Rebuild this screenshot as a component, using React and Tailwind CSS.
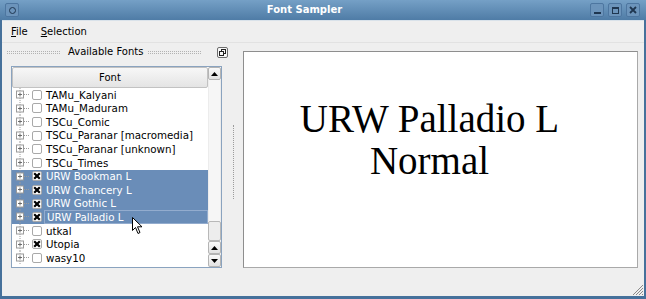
import React from "react";
import clsx from "clsx";

const fonts = [
  { name: "TAMu_Kalyani" },
  { name: "TAMu_Maduram" },
  { name: "TSCu_Comic" },
  { name: "TSCu_Paranar [macromedia]" },
  { name: "TSCu_Paranar [unknown]" },
  { name: "TSCu_Times" },
  { name: "URW Bookman L", checked: true, selected: true },
  { name: "URW Chancery L", checked: true, selected: true },
  { name: "URW Gothic L", checked: true, selected: true },
  { name: "URW Palladio L", checked: true, selected: true, focus: true },
  { name: "utkal" },
  { name: "Utopia", checked: true },
  { name: "wasy10" },
];

function TreeGuide() {
  return (
    <svg width="20" height="13.6" viewBox="0 0 20 13.6" className="shrink-0">
      <line x1="8" y1="0" x2="8" y2="13.6" stroke="#9c9c9c" strokeDasharray="1 1" />
      <line x1="12" y1="6.5" x2="18" y2="6.5" stroke="#9c9c9c" strokeDasharray="1 1" />
      <rect x="4.5" y="3" width="7" height="7" fill="#fff" stroke="#9a9a9a" />
      <line x1="6" y1="6.5" x2="10" y2="6.5" stroke="#6a6a6a" />
      <line x1="8" y1="4.5" x2="8" y2="8.5" stroke="#6a6a6a" />
    </svg>
  );
}

function CheckBox({ checked }) {
  return (
    <div className="flex h-[10px] w-[10px] shrink-0 items-center justify-center rounded-[2px] border border-[#a9a9a9] bg-white">
      {checked && (
        <svg width="8" height="8" viewBox="0 0 8 8">
          <path d="M1.2 1.2 L6.8 6.8 M6.8 1.2 L1.2 6.8" stroke="#000" strokeWidth="2.2" />
        </svg>
      )}
    </div>
  );
}

function Row({ name, checked, selected, focus }) {
  return (
    <div
      className={clsx(
        "flex h-[13.6px] items-center text-[10.3px]",
        selected ? "bg-[#6a8db8] text-white" : "text-black"
      )}>
      <TreeGuide />
      <CheckBox checked={checked} />
      <span
        className={clsx(
          "ml-[2px] flex h-full flex-1 items-center pl-[2px] whitespace-nowrap",
          focus && "border border-[#93acce]"
        )}>
        {name}
      </span>
    </div>
  );
}

function ScrollButton({ down }) {
  return (
    <div className="flex h-[13px] items-center justify-center rounded-[2px] border border-[#b4b4b4] bg-gradient-to-b from-[#fafafa] to-[#e2e2e2]">
      <svg width="7" height="4" viewBox="0 0 7 4">
        <path d={down ? "M0 0 H7 L3.5 4 Z" : "M0 4 H7 L3.5 0 Z"} fill="#000" />
      </svg>
    </div>
  );
}

function TitleButton({ children }) {
  return (
    <div className="flex h-[14px] w-[14px] items-center justify-center rounded-[2px] border border-[#4d76a0] bg-[#6c94bb]">
      {children}
    </div>
  );
}

export default function App() {
  return (
    <div className="relative flex h-[299px] w-[646px] flex-col overflow-hidden bg-[#46719b] font-['DejaVu_Sans',sans-serif] text-[10px] leading-none">
      {/* title bar */}
      <div className="flex h-[20px] items-center bg-gradient-to-b from-[#75a0c6] to-[#4f7ca6] px-[5px]">
        <TitleButton>
          <div className="h-[7px] w-[7px] rounded-full border-[1.5px] border-[#1f3650]" />
        </TitleButton>
        <div className="flex-1 text-center font-bold text-white">Font Sampler</div>
        <div className="flex gap-[4px] pr-[1px]">
          <TitleButton>
            <div className="mt-[6px] h-[2px] w-[7px] bg-[#1f3650]" />
          </TitleButton>
          <TitleButton>
            <div className="h-[7px] w-[7px] border-[1.5px] border-t-[2px] border-[#1f3650]" />
          </TitleButton>
          <TitleButton>
            <svg width="8" height="8" viewBox="0 0 8 8">
              <path d="M1 1 L7 7 M7 1 L1 7" stroke="#1f3650" strokeWidth="1.8" />
            </svg>
          </TitleButton>
        </div>
      </div>

      <div className="mx-[2px] mb-[3px] flex flex-1 flex-col border-t border-[#d9e2ea] bg-[#efefef]">
        {/* menu bar */}
        <div className="flex h-[22px] items-center gap-[13px] border-b border-[#e2e2e2] pl-[9px] text-black">
          <span>
            <span className="underline">F</span>ile
          </span>
          <span>
            <span className="underline">S</span>election
          </span>
        </div>

        <div className="flex flex-1">
          {/* dock */}
          <div className="flex w-[228px] flex-col">
            <div className="flex h-[18px] items-center pl-[5px] pr-[2px]">
              <div className="h-[3px] w-[53px] border-y border-dotted border-[#b3b3b3]" />
              <span className="ml-[8px] text-black">Available Fonts</span>
              <div className="ml-[5px] h-[3px] w-[53px] border-y border-dotted border-[#b3b3b3]" />
              <div className="flex-1" />
              <div className="flex h-[11px] w-[11px] items-center justify-center rounded-[2px] border border-[#6d6d6d] bg-[#f7f7f7]">
                <svg width="7" height="7" viewBox="0 0 7 7">
                  <rect x="2.5" y="0.5" width="4" height="4" fill="none" stroke="#222" />
                  <rect x="0.5" y="2.5" width="4" height="4" fill="#f7f7f7" stroke="#222" />
                </svg>
              </div>
            </div>

            <div className="ml-[9px] mt-[5px] flex h-[202px] w-[211px] border border-[#8aa3bf] bg-white">
              <div className="flex flex-1 flex-col">
                <div className="flex h-[21px] items-center justify-center rounded-[2px] border border-[#c2c2c2] bg-gradient-to-b from-[#f7f7f7] to-[#e4e4e4] text-black">
                  Font
                </div>
                {fonts.map((f) => (
                  <Row key={f.name} {...f} />
                ))}
              </div>
              <div className="flex w-[13px] flex-col bg-[#f6f6f6]">
                <ScrollButton />
                <div className="flex-1 border-x border-[#ececec]" />
                <div className="h-[20px] rounded-[2px] border border-[#b8b8b8] bg-[#ededed]" />
                <ScrollButton />
                <ScrollButton down />
              </div>
            </div>
          </div>

          {/* splitter */}
          <div className="flex w-[8px] items-center pl-[3px]">
            <div className="mt-[-16px] h-[74px] border-l border-dotted border-[#9b9b9b]" />
          </div>

          {/* preview */}
          <div className="flex flex-1 flex-col">
            <div className="ml-[5px] mr-[6px] mt-[8px] flex h-[217px] flex-col items-center border border-[#a9a9a9] border-l-[#8e8e8e] border-t-[#8e8e8e] bg-white pr-[22px] pt-[46px] font-['Liberation_Serif',serif] text-[39px] leading-[42px] text-black">
              <div>URW Palladio L</div>
              <div>Normal</div>
            </div>
            <div className="flex flex-1 items-end justify-end">
              <svg width="13" height="13" viewBox="0 0 13 13">
                <path d="M12 2 L2 12 M12 5 L5 12 M12 8 L8 12 M12 11 L11 12" stroke="#8a8a8a" strokeWidth="1" />
              </svg>
            </div>
          </div>
        </div>
      </div>

      {/* mouse pointer */}
      <svg className="absolute left-[132px] top-[217px]" width="12" height="18" viewBox="0 0 12 18">
        <path d="M0.5 0.5 L0.5 13.5 L3.5 10.5 L6 16.5 L8 15.5 L5.5 9.8 L10 9.8 Z" fill="#fff" stroke="#000" strokeWidth="1" />
      </svg>
    </div>
  );
}
